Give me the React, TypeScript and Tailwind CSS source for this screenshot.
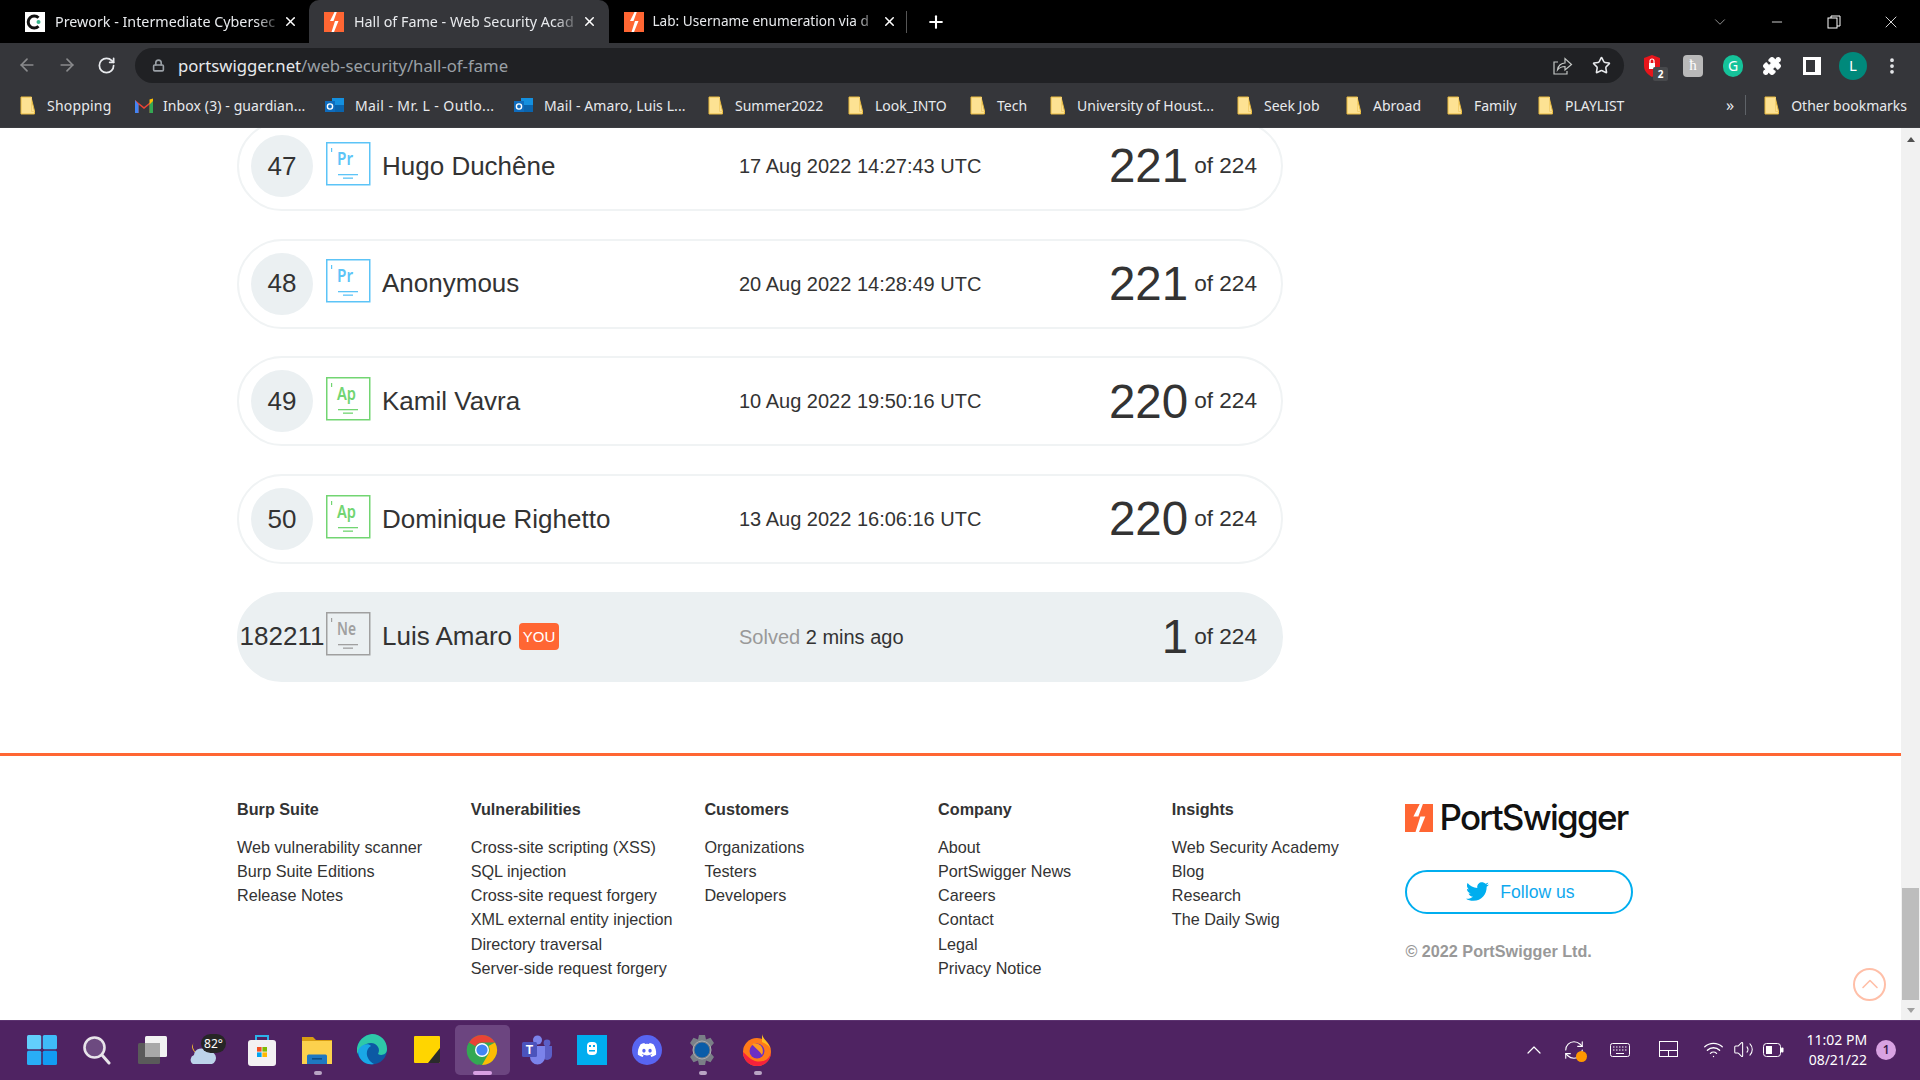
import React from "react";
import { FaTwitter, FaDiscord } from "react-icons/fa";
import { ArrowLeft, ArrowRight, RotateCw, Lock, Star, MoreVertical, Puzzle, ChevronDown, Minus, X, Plus, ChevronUp, Wifi, Volume2, RefreshCw } from "lucide-react";

const PS = ({ size = 20 }: { size?: number }) => (
  <svg width={size} height={size} viewBox="0 0 20 20" className="shrink-0">
    <rect width="20" height="20" fill="#ff6633" />
    <path d="M10.5 0 L6 9 H11 L7.5 20 H10 L14.5 9 H9.5 L12.8 0 Z" fill="#fff" />
  </svg>
);

const Folder = () => (
  <svg width="16" height="19" viewBox="0 0 16 19" className="shrink-0">
    <path d="M1 1 H11.5 V3 L14.5 15 V18 H1 Z" fill="#fde293" stroke="#e8b93e" strokeWidth="1" />
    <path d="M11.5 1 V15.5 H14.5" fill="none" stroke="#f4d06f" strokeWidth="1" />
  </svg>
);

const Gmail = () => (
  <svg width="18" height="15" viewBox="0 0 18 15" className="shrink-0">
    <path d="M0 2 L9 9 L18 2 V15 H14.5 V6.5 L9 11 L3.5 6.5 V15 H0 Z" fill="#ea4335" />
    <path d="M0 2 V15 H3.5 V6.5 Z" fill="#4285f4" />
    <path d="M18 2 V15 H14.5 V6.5 Z" fill="#34a853" />
    <path d="M14.5 6.5 V1.5 L18 0.5 V3 Z" fill="#fbbc04" />
  </svg>
);

const Outlook = () => (
  <svg width="19" height="19" viewBox="0 0 19 19" className="shrink-0">
    <rect x="7" y="2" width="12" height="14" fill="#1490df" />
    <rect x="7" y="9" width="12" height="7" fill="#0a64ad" />
    <rect x="0" y="5" width="10" height="11" fill="#0f6cbd" />
    <circle cx="5" cy="10.5" r="2.6" fill="none" stroke="#fff" strokeWidth="1.4" />
  </svg>
);

const bookmarks = [
  { label: "Shopping", icon: <Folder />, w: "w-[115px] gap-[11px]", t: "tracking-[0.2px]" },
  { label: "Inbox (3) - guardian...", icon: <Gmail />, w: "w-[190px] gap-[10px]", t: "tracking-[0.1px]" },
  { label: "Mail - Mr. L - Outlo...", icon: <Outlook />, w: "w-[189px] gap-[11px]", t: "tracking-[0.4px]" },
  { label: "Mail - Amaro, Luis L...", icon: <Outlook />, w: "w-[194px] gap-[11px]", t: "tracking-[0.1px]" },
  { label: "Summer2022", icon: <Folder />, w: "w-[140px] gap-[11px]", t: "" },
  { label: "Look_INTO", icon: <Folder />, w: "w-[122px] gap-[11px]", t: "" },
  { label: "Tech", icon: <Folder />, w: "w-[80px] gap-[11px]", t: "" },
  { label: "University of Houst...", icon: <Folder />, w: "w-[187px] gap-[11px]", t: "" },
  { label: "Seek Job", icon: <Folder />, w: "w-[109px] gap-[11px]", t: "" },
  { label: "Abroad", icon: <Folder />, w: "w-[101px] gap-[11px]", t: "" },
  { label: "Family", icon: <Folder />, w: "w-[91px] gap-[11px]", t: "" },
  { label: "PLAYLIST", icon: <Folder />, w: "w-[150px] gap-[11px]", t: "" },
];

const Tab = ({ icon, title, active, w, tx }: { icon: React.ReactNode; title: string; active?: boolean; w: string; tx: string }) => (
  <div className={`${w} h-[43px] flex items-center relative pl-[15px] ${active ? "bg-[#35363a] rounded-t-[10px]" : ""}`}>
    {icon}
    <div className={`${tx} overflow-hidden whitespace-nowrap text-[#e8eaed] [mask-image:linear-gradient(to_right,black_88%,transparent)]`}>{title}</div>
    <X size={15} strokeWidth={2.4} className="text-white" />
  </div>
);

const Chrome = () => (
  <svg width="32" height="32" viewBox="0 0 32 32">
    <circle cx="16" cy="16" r="15" fill="#34a853" />
    <path d="M16 1 A15 15 0 0 1 29 8.5 H16 A7.5 7.5 0 0 0 9.5 12.2 L3 8.5 A15 15 0 0 1 16 1Z" fill="#ea4335" />
    <path d="M29 8.5 A15 15 0 0 1 16 31 L22.5 19.8 A7.5 7.5 0 0 0 22.5 12 Z" fill="#fbbc04" />
    <path d="M3 8.5 L9.7 20 A7.5 7.5 0 0 0 16 23.5 L12 31 A15 15 0 0 1 3 8.5Z" fill="#34a853" />
    <circle cx="16" cy="16" r="7" fill="#fff" />
    <circle cx="16" cy="16" r="5.6" fill="#4285f4" />
  </svg>
);

const taskIcons: React.ReactNode[] = [
  <svg width="30" height="30" viewBox="0 0 30 30"><rect width="14.2" height="14.2" rx="1.5" fill="#62cffc" /><rect x="15.8" width="14.2" height="14.2" rx="1.5" fill="#3fbcf8" /><rect y="15.8" width="14.2" height="14.2" rx="1.5" fill="#29aef6" /><rect x="15.8" y="15.8" width="14.2" height="14.2" rx="1.5" fill="#129cf2" /></svg>,
  <svg width="30" height="30" viewBox="0 0 30 30"><circle cx="12.5" cy="12.5" r="10" fill="#6d4a80" stroke="#e8e4ea" strokeWidth="2.6" /><path d="M20 20 L27 28" stroke="#e8e4ea" strokeWidth="3" strokeLinecap="round" /></svg>,
  <svg width="30" height="30" viewBox="0 0 30 30"><rect x="1" y="8" width="22" height="21" rx="1.5" fill="#5a5a5a" /><rect x="8" y="1" width="22" height="21" rx="1.5" fill="#f2f2f2" /><rect x="8" y="8" width="15" height="14" fill="#a8a8a8" /></svg>,
  <svg width="38" height="32" viewBox="0 0 38 32"><path d="M4 12 A8 8 0 0 0 14 20 A8 8 0 0 1 6 8Z" fill="#fbc02d" /><path d="M5 30 A5 5 0 0 1 6 21 A7 7 0 0 1 19 18 A6 6 0 0 1 24 30 Z" fill="#bcd3ea" /><rect x="13" y="0" width="25" height="19" rx="9.5" fill="#262626" /><text x="25.5" y="14" fontSize="12" fontFamily="'Noto Sans',sans-serif" fill="#fff" textAnchor="middle">82°</text></svg>,
  <svg width="30" height="32" viewBox="0 0 30 32"><path d="M9 7 V2 H21 V7" fill="none" stroke="#2cb2ea" strokeWidth="2" /><rect x="1" y="6" width="28" height="26" rx="3" fill="#f3f1f2" /><rect x="10" y="13" width="4.6" height="4.6" fill="#f25022" /><rect x="15.4" y="13" width="4.6" height="4.6" fill="#7fba00" /><rect x="10" y="18.4" width="4.6" height="4.6" fill="#00a4ef" /><rect x="15.4" y="18.4" width="4.6" height="4.6" fill="#ffb900" /></svg>,
  <svg width="30" height="30" viewBox="0 0 30 30"><path d="M0 2 H11 L14 5 H30 V28 H0Z" fill="#d89d12" /><rect y="6" width="30" height="23" fill="#fcd14d" /><path d="M5 29 V21 A1.5 1.5 0 0 1 6.5 19.5 H23.5 A1.5 1.5 0 0 1 25 21 V29Z" fill="#1f78c1" /><rect x="10" y="23" width="10" height="1.6" fill="#0c4f88" /></svg>,
  <svg width="30" height="31" viewBox="0 0 30 31"><circle cx="15" cy="15.5" r="15" fill="#0c59a4" /><path d="M0 14 C2 3 12 0 15 0 C24 0 30 7 30 15 C30 21 24 22 21 20 C24 15 20 9 14 9 C7 9 3 14 0 20Z" fill="#2ec9a8" /><path d="M14 12 C8 15 8 25 17 30 C8 32 1 25 1 17 C3 11 11 8 14 12Z" fill="#1aa7e6" /></svg>,
  <svg width="26" height="27" viewBox="0 0 26 27"><rect width="26" height="27" rx="1" fill="#ffd500" /><path d="M14 27 L26 12 V26 A1 1 0 0 1 25 27Z" fill="#2b2b2b" /></svg>,
  <Chrome />,
  <svg width="30" height="30" viewBox="0 0 30 30"><circle cx="25" cy="8" r="3.4" fill="#5b5fc7" /><circle cx="15.5" cy="5" r="4.5" fill="#7b83eb" /><path d="M20 11 H30 V20 A5 5 0 0 1 20 20Z" fill="#5b5fc7" /><path d="M8 11 H23 V22 A7.5 7.5 0 0 1 8 22Z" fill="#7b83eb" /><rect x="0" y="7" width="15" height="15" rx="1.5" fill="#4b53bc" /><text x="7.5" y="19" fontSize="12" fontWeight="700" fontFamily="'Liberation Sans',sans-serif" fill="#fff" textAnchor="middle">T</text></svg>,
  <svg width="30" height="30" viewBox="0 0 30 30"><rect width="30" height="30" fill="#00adef" /><rect x="10" y="7" width="10" height="13" rx="4" fill="#fff" /><rect x="12" y="10" width="2" height="2" fill="#00adef" /><rect x="16" y="10" width="2" height="2" fill="#00adef" /><rect x="12" y="15" width="6" height="1.5" fill="#00adef" /></svg>,
  <div className="w-[30px] h-[30px] rounded-full bg-[#5865f2] flex items-center justify-center"><FaDiscord size={20} color="#fff" /></div>,
  <svg width="30" height="30" viewBox="0 0 30 30"><path d="M12 0 H18 L19 4.5 L23.5 2.8 L27 8 L24 11.5 V18.5 L27 22 L23.5 27.2 L19 25.5 L18 30 H12 L11 25.5 L6.5 27.2 L3 22 L6 18.5 V11.5 L3 8 L6.5 2.8 L11 4.5Z" fill="#7a7f87" /><circle cx="15" cy="15" r="7.5" fill="#0a5ca8" /><circle cx="15" cy="15" r="9" fill="none" stroke="#a8adb3" strokeWidth="1" /></svg>,
  <svg width="30" height="32" viewBox="0 0 30 32"><circle cx="15" cy="18" r="14" fill="#ff7a18" /><path d="M20 0 C21 6 28 8 29 18 C29 12 24 10 20 8Z" fill="#ffbd1f" /><path d="M1 18 A14 14 0 0 0 29 18 C28 26 20 29 13 27 C7 25 4 20 1 18Z" fill="#f5213c" /><circle cx="15" cy="17" r="7.5" fill="#6b2fc4" /><path d="M10 10 C18 8 23 14 20 21 C17 16 13 14 10 10Z" fill="#ff9a1f" /></svg>,
];

const Row = ({ rank, badge, color, name, date, score, you }: { rank: string; badge: string; color: string; name: string; date?: string; score: string; you?: boolean }) => (
  <div className={`w-[1046px] h-[90px] rounded-[45px] flex items-center pl-[12px] pr-[24px] shrink-0 border-2 ${you ? "bg-[#ebf0f2] border-[#ebf0f2]" : "border-[#f0f3f4]"}`}>
    <div className={`w-[62px] h-[62px] rounded-full shrink-0 flex items-center justify-center text-[26px] whitespace-nowrap ${you ? "" : "bg-[#ebf0f2]"}`}>{rank}</div>
    <svg width="45" height="44" viewBox="0 0 45 44" className="ml-[13px] -mt-[5px] shrink-0">
      <rect x="0.75" y="0.75" width="43" height="42" fill="none" stroke={color} strokeWidth="1.5" />
      <rect x="5" y="6" width="1.2" height="4" fill={color} />
      <text x="11" y="23" fontSize="18" fontFamily="'Noto Sans',sans-serif" fontWeight="600" fill={color} textLength={badge === "Pr" ? 16 : 19} lengthAdjust="spacingAndGlyphs">{badge}</text>
      <rect x="12" y="32" width="20" height="1.3" fill={color} />
      <rect x="17" y="35.5" width="10" height="1.3" fill={color} />
    </svg>
    <div className="ml-[11px] w-[357px] flex items-center shrink-0 text-[26px] whitespace-nowrap">
      {name}
      {you && <span className="ml-[7px] h-[27px] w-[40px] rounded-[4px] bg-[#ff6633] text-white text-[15px] flex items-center justify-center">YOU</span>}
    </div>
    <div className="text-[20px] whitespace-nowrap">
      {date ?? (<><span className="text-[#999999]">Solved</span> 2 mins ago</>)}
    </div>
    <div className="ml-auto flex items-center">
      <span className="text-[47.5px] leading-none">{score}</span>
      <span className="text-[22.6px] ml-[6px]">of 224</span>
    </div>
  </div>
);

const footerCols = [
  { h: "Burp Suite", l: ["Web vulnerability scanner", "Burp Suite Editions", "Release Notes"] },
  { h: "Vulnerabilities", l: ["Cross-site scripting (XSS)", "SQL injection", "Cross-site request forgery", "XML external entity injection", "Directory traversal", "Server-side request forgery"] },
  { h: "Customers", l: ["Organizations", "Testers", "Developers"] },
  { h: "Company", l: ["About", "PortSwigger News", "Careers", "Contact", "Legal", "Privacy Notice"] },
  { h: "Insights", l: ["Web Security Academy", "Blog", "Research", "The Daily Swig"] },
];

export default function App() {
  return (
    <div className="w-[1920px] h-[1080px] overflow-hidden flex flex-col bg-white font-['Liberation_Sans',Arial,sans-serif] text-[#333333]">
      {/* Tabs */}
      <div className="h-[43px] bg-black flex items-center shrink-0 font-['Noto_Sans',sans-serif]">
        <div className="w-[10px]" />
        <Tab w="w-[299px]" tx="ml-[10px] w-[228px] text-[14.3px]" title="Prework - Intermediate Cybersec" icon={
          <svg width="20" height="20" viewBox="0 0 20 20" className="shrink-0"><rect width="20" height="20" fill="#fff" /><path d="M13.5 5.8 A6 6 0 1 0 13.5 14.2" fill="none" stroke="#111" strokeWidth="3" /><circle cx="13.5" cy="10" r="2" fill="#35b58c" /></svg>
        } />
        <Tab w="w-[300px]" active tx="ml-[10px] w-[228px] text-[14.3px]" title="Hall of Fame - Web Security Acad" icon={<PS />} />
        <Tab w="w-[297px]" tx="ml-[8.5px] w-[229px] text-[13.6px]" title="Lab: Username enumeration via d" icon={<PS />} />
        <div className="w-px h-[22px] bg-[#555]" />
        <Plus size={20} strokeWidth={2.5} className="ml-[19px] text-white" />
        <ChevronDown size={18} strokeWidth={1} className="ml-[765px] text-[#bbb]" />
        <Minus size={16} strokeWidth={1.2} className="ml-[40px] text-white" />
        <svg width="14" height="14" viewBox="0 0 14 14" className="ml-[42px]"><rect x="1" y="3" width="9" height="10" fill="none" stroke="#fff" /><path d="M4 3 V1 H13 V11 H10" fill="none" stroke="#fff" /></svg>
        <X size={20} strokeWidth={1} className="ml-[40px] text-white" />
      </div>
      {/* Toolbar */}
      <div className="h-[40px] bg-[#35363a] flex shrink-0 font-['Noto_Sans',sans-serif]">
        <div className="w-[135px] flex items-center pl-[17px] gap-[20px] pt-[4px]">
          <ArrowLeft size={20} strokeWidth={2} className="text-[#8a8b8d]" />
          <ArrowRight size={20} strokeWidth={2} className="text-[#8a8b8d]" />
          <RotateCw size={19} strokeWidth={2.2} className="text-[#e8eaed]" />
        </div>
        <div className="mt-[5px] w-[1489px] h-[35px] rounded-full bg-[#202124] flex items-center pl-[17px]">
          <Lock size={13} strokeWidth={3} className="text-[#9aa0a6]" />
          <div className="ml-[13px] text-[16.7px] text-[#e8eaed] whitespace-nowrap">portswigger.net<span className="text-[#9aa0a6]">/web-security/hall-of-fame</span></div>
          <svg width="21" height="21" viewBox="0 0 21 21" className="ml-auto" fill="none" stroke="#c4c7c5" strokeWidth="1.2">
            <path d="M6 7 H2 V19 H15 V16" />
            <path d="M5.5 15 C6 10.5 9.5 8 13 8 V3.5 L19.5 9.5 L13 15 V11.5 C10 11.5 7.5 12.5 5.5 15Z" />
          </svg>
          <Star size={19} strokeWidth={2} className="ml-[19px] mr-[13px] text-[#e8eaed]" />
        </div>
        <div className="flex-1 flex items-center pt-[5px] pl-[18px]">
          <div className="relative w-[20px] h-[24px]">
            <svg width="20" height="24" viewBox="0 0 20 24"><path d="M10 1 L18 4 V12 C18 18 13 21 10 23 C7 21 2 18 2 12 V4Z" fill="#e8151b" /><rect x="7" y="9" width="6" height="6" fill="#fff" /><path d="M8 9 V7 A2 2 0 0 1 12 7 V9" fill="none" stroke="#fff" strokeWidth="1.2" /></svg>
            <span className="absolute left-[11px] top-[13px] w-[15px] h-[14px] rounded-[2px] bg-[#47494c] text-white text-[10px] font-bold leading-[14px] text-center">2</span>
          </div>
          <div className="ml-[21px] w-[20px] h-[22px] rounded-[4px] bg-[#b9b9b9] flex items-center justify-center text-white text-[15px] font-['Liberation_Serif',serif]">ћ</div>
          <div className="ml-[20px] w-[20px] h-[22px] rounded-full bg-[#15c39a] flex items-center justify-center text-white text-[14px]">G</div>
          <Puzzle size={20} fill="#fff" strokeWidth={1.5} className="ml-[19px] text-white" />
          <div className="ml-[21px] w-[18px] h-[18px] border-[3px] border-white border-r-[6px]" />
          <div className="ml-[18px] w-[28px] h-[28px] rounded-full bg-[#00897b] flex items-center justify-center text-white text-[15px]">L</div>
          <MoreVertical size={20} strokeWidth={2.5} className="ml-[15px] text-[#e8eaed]" />
        </div>
      </div>
      {/* Bookmarks */}
      <div className="h-[45px] bg-[#35363a] flex items-center pl-[20px] shrink-0 text-[#e8eaed] text-[14px] whitespace-nowrap font-['Noto_Sans',sans-serif] border-b border-[#3c3d41]">
        {bookmarks.map((b) => (
          <div key={b.label} className={`${b.w} flex items-center shrink-0`}>
            {b.icon}
            <span className={b.t}>{b.label}</span>
          </div>
        ))}
        <span className="ml-[38px] text-[16px]">»</span>
        <div className="ml-[11px] w-px h-[20px] bg-[#5f6368]" />
        <div className="ml-[18px] flex items-center gap-[11px]"><Folder /><span>Other bookmarks</span></div>
      </div>
      {/* Page */}
      <div className="flex-1 min-h-0 flex">
        <div className="w-[1901px] overflow-hidden flex flex-col">
          <div className="-mt-[7px] pl-[237px] flex flex-col gap-[27.7px] shrink-0">
            <Row rank="47" badge="Pr" color="#5cc4f7" name="Hugo Duchêne" date="17 Aug 2022 14:27:43 UTC" score="221" />
            <Row rank="48" badge="Pr" color="#5cc4f7" name="Anonymous" date="20 Aug 2022 14:28:49 UTC" score="221" />
            <Row rank="49" badge="Ap" color="#72d572" name="Kamil Vavra" date="10 Aug 2022 19:50:16 UTC" score="220" />
            <Row rank="50" badge="Ap" color="#72d572" name="Dominique Righetto" date="13 Aug 2022 16:06:16 UTC" score="220" />
            <Row rank="182211" badge="Ne" color="#a0a0a0" name="Luis Amaro" score="1" you />
          </div>
          <div className="mt-[71px] border-t-[3px] border-[#ff6633] pl-[237px] pt-[41px] flex flex-1 relative">
            {footerCols.map((c) => (
              <div key={c.h} className="w-[233.7px] shrink-0 text-[16.2px]">
                <div className="font-bold leading-[24px] mb-[14px]">{c.h}</div>
                {c.l.map((t) => (
                  <div key={t} className="leading-[24.2px] whitespace-nowrap">{t}</div>
                ))}
              </div>
            ))}
            <div className="w-[228px] shrink-0">
              <div className="flex items-center h-[36px] mt-[3px]">
                <PS size={28} />
                <span className="ml-[6px] text-[35px] leading-none tracking-[-1.75px] text-[#111] font-['Inter',sans-serif] font-medium whitespace-nowrap">PortSwigger</span>
              </div>
              <div className="mt-[34px] h-[44px] rounded-full border-2 border-[#00aeef] flex items-center justify-center text-[#0fa8ee] text-[17.6px] gap-[11px] pl-[2px]">
                <FaTwitter size={23} color="#00aeef" />
                Follow us
              </div>
              <div className="mt-[25px] font-bold text-[16.2px] text-[#999999] whitespace-nowrap">© 2022 PortSwigger Ltd.</div>
            </div>
            <div className="absolute left-[1853px] top-[212px] w-[33px] h-[33px] rounded-full border-2 border-[#ffbfa8] flex items-center justify-center">
              <ChevronUp size={28} strokeWidth={1.4} className="text-[#ffbfa8]" />
            </div>
          </div>
        </div>
        <div className="w-[19px] bg-[#f1f1f1] flex flex-col items-center">
          <div className="h-[22px] flex items-center"><div className="w-0 h-0 border-x-[4px] border-x-transparent border-b-[5px] border-b-[#505050]" /></div>
          <div className="flex-1" />
          <div className="w-[17px] h-[112px] bg-[#bdbdbd]" />
          <div className="h-[20px] flex items-center"><div className="w-0 h-0 border-x-[4px] border-x-transparent border-t-[5px] border-t-[#a0a0a0]" /></div>
        </div>
      </div>
      {/* Taskbar */}
      <div className="h-[60px] bg-[#4f2362] border-t border-[#5c3370] flex items-center pl-[14.5px] pb-[2px] shrink-0 font-['Noto_Sans',sans-serif] text-white">
        {taskIcons.map((ic, i) => (
          <div key={i} className={`w-[55px] h-[50px] flex items-center justify-center relative rounded-[5px] ${i === 8 ? "bg-[#6c4580]" : ""}`}>
            {ic}
            {(i === 5 || i === 12 || i === 13) && <span className="absolute bottom-[0px] left-[24px] w-[8px] h-[4px] rounded-full bg-[#b9a4c4]" />}
            {i === 8 && <span className="absolute bottom-[0px] left-[18px] w-[19px] h-[4px] rounded-full bg-[#d9a0e4]" />}
          </div>
        ))}
        <ChevronUp size={24} strokeWidth={1.2} className="ml-[737px]" />
        <div className="relative ml-[17px] w-[22px] h-[22px]">
          <RefreshCw size={22} strokeWidth={1.2} />
          <span className="absolute right-[-2px] bottom-[-1px] w-[11px] h-[11px] rounded-full bg-[#ff9800]" />
        </div>
        <svg width="20" height="14" viewBox="0 0 20 14" className="ml-[25px]"><rect x="0.5" y="0.5" width="19" height="13" rx="2" fill="none" stroke="#fff" /><path d="M3 4 H17 M3 7 H17" stroke="#fff" strokeDasharray="1.5 1.5" /><path d="M6 10.5 H14" stroke="#fff" /></svg>
        <svg width="20" height="17" viewBox="0 0 20 17" className="ml-[29px]"><rect x="0.5" y="0.5" width="18" height="15" fill="none" stroke="#fff" /><path d="M0.5 9.5 H18.5 M9.5 9.5 V15.5" stroke="#fff" /></svg>
        <Wifi size={21} strokeWidth={1.5} className="ml-[24px]" />
        <Volume2 size={21} strokeWidth={1.2} className="ml-[9px]" />
        <svg width="21" height="14" viewBox="0 0 21 14" className="ml-[9px]"><rect x="0.5" y="0.5" width="17" height="13" rx="3" fill="none" stroke="#fff" /><rect x="3" y="3" width="6" height="8" fill="#fff" /><rect x="18" y="4.5" width="2.5" height="5" rx="1" fill="#fff" /></svg>
        <div className="ml-[23px] text-[14px] leading-[20px] text-right whitespace-nowrap">
          <div>11:02 PM</div>
          <div>08/21/22</div>
        </div>
        <div className="ml-[9px] w-[20px] h-[20px] rounded-full bg-[#d8a2e2] text-[#3a1a48] text-[12px] flex items-center justify-center font-semibold">1</div>
      </div>
    </div>
  );
}
